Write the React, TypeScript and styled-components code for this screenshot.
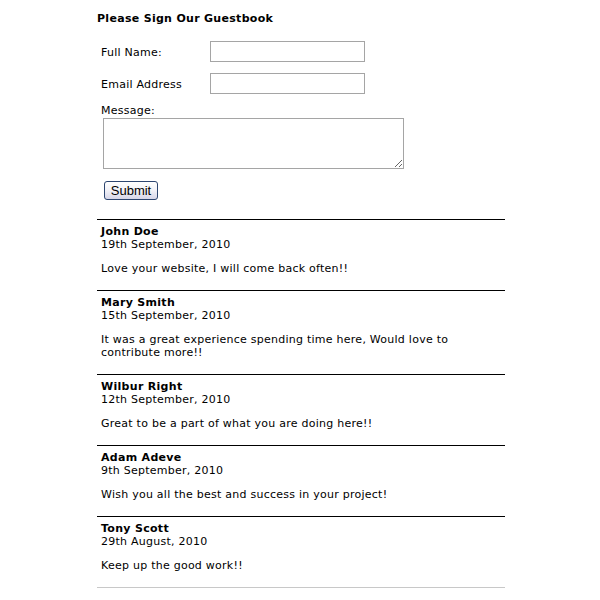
import React from "react";
import styled, { createGlobalStyle } from "styled-components";

const Global = createGlobalStyle`
  html, body { margin: 0; padding: 0; background: #ffffff; }
  body { font-family: "DejaVu Sans", Verdana, sans-serif; font-size: 11px; color: #000; letter-spacing: 0.25px; }
`;

const Page = styled.div`
  width: 408px;
  padding: 12px 0 0 97px;
`;

const Title = styled.div`
  font-weight: bold;
  font-size: 11px;
  line-height: 13px;
  letter-spacing: 0.3px;
`;

const Form = styled.form`
  margin-top: 16px;
  display: flex;
  flex-direction: column;
`;

const Row = styled.div`
  display: grid;
  grid-template-columns: 109px 155px;
  align-items: center;
  padding-left: 4px;
  margin-bottom: 11px;
`;

const Label = styled.label`
  line-height: 13px;
  padding-top: 1px;
`;

const MessageLabel = styled.label`
  display: block;
  margin-top: -2px;
  padding: 1px 0 0 4px;
  line-height: 13px;
  height: 13px;
`;

const TextInput = styled.input`
  box-sizing: border-box;
  width: 155px;
  height: 21px;
  margin: 0;
  border: 1px solid #a5a5a5;
  background: #fff;
  padding: 1px 3px;
  font-family: "DejaVu Sans", Verdana, sans-serif;
  font-size: 11px;
  outline: none;
`;

const MessageArea = styled.textarea`
  box-sizing: border-box;
  display: block;
  width: 301px;
  height: 51px;
  margin: 1px 0 0 6px;
  border: 1px solid #a5a5a5;
  background: #fff;
  padding: 2px;
  font-family: "DejaVu Sans", Verdana, sans-serif;
  font-size: 11px;
  outline: none;
`;

const SubmitButton = styled.button`
  box-sizing: border-box;
  align-self: flex-start;
  width: 54px;
  height: 19px;
  margin: 12px 0 0 7px;
  padding: 0;
  border: 1px solid #2d4670;
  border-radius: 3px;
  background: linear-gradient(#ffffff 0%, #f3f3f8 45%, #d6d6e8 100%);
  font-family: "Liberation Sans", Arial, sans-serif;
  font-size: 13px;
  line-height: 17px;
  letter-spacing: 0;
  color: #000;
`;

const Entries = styled.div`
  margin-top: 19px;
`;

const Entry = styled.div<{ $last?: boolean }>`
  border-top: 1px solid #000;
  border-bottom: ${(p) => (p.$last ? "1px solid #c8c8c8" : "none")};
  padding: 5px 4px 15px 4px;
  line-height: 13px;
`;

const Name = styled.div`
  font-weight: bold;
  letter-spacing: 0.3px;
`;

const DateLine = styled.div``;

const Message = styled.p`
  margin: 11px 0 0 0;
`;

const entries = [
  { name: "John Doe", date: "19th September, 2010", msg: "Love your website, I will come back often!!" },
  {
    name: "Mary Smith",
    date: "15th September, 2010",
    msg: "It was a great experience spending time here, Would love to contribute more!!",
  },
  { name: "Wilbur Right", date: "12th September, 2010", msg: "Great to be a part of what you are doing here!!" },
  { name: "Adam Adeve", date: "9th September, 2010", msg: "Wish you all the best and success in your project!" },
  { name: "Tony Scott", date: "29th August, 2010", msg: "Keep up the good work!!" },
];

export default function App() {
  return (
    <>
      <Global />
      <Page>
        <Title>Please Sign Our Guestbook</Title>
        <Form onSubmit={(e) => e.preventDefault()}>
          <Row>
            <Label htmlFor="fullname">Full Name:</Label>
            <TextInput id="fullname" type="text" />
          </Row>
          <Row>
            <Label htmlFor="email">Email Address</Label>
            <TextInput id="email" type="text" />
          </Row>
          <MessageLabel htmlFor="message">Message:</MessageLabel>
          <MessageArea id="message" />
          <SubmitButton type="submit">Submit</SubmitButton>
        </Form>
        <Entries>
          {entries.map((e, i) => (
            <Entry key={e.name} $last={i === entries.length - 1}>
              <Name>{e.name}</Name>
              <DateLine>{e.date}</DateLine>
              <Message>{e.msg}</Message>
            </Entry>
          ))}
        </Entries>
      </Page>
    </>
  );
}
